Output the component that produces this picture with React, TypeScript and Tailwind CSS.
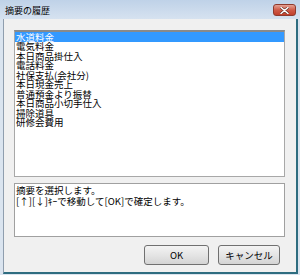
import React from "react";

const items = [
  "水道料金",
  "電気料金",
  "本日商品掛仕入",
  "電話料金",
  "社保支払(会社分)",
  "本日現金売上",
  "普通預金より振替",
  "本日商品小切手仕入",
  "掃除道具",
  "研修会費用",
];

const font = { fontFamily: '"Noto Sans CJK JP", "Noto Sans", sans-serif' };

export default function App() {
  return (
    <div
      className="w-[300px] h-[275px] flex flex-col bg-[#dae4ef] text-black overflow-hidden"
      style={font}
    >
      {/* Title bar */}
      <div className="h-[19px] flex items-start pl-[5px] bg-gradient-to-b from-[#bfd2e8] to-[#d6e2f0] shrink-0">
        <span className="text-[9px] leading-[9px] mt-[6px]">摘要の履歴</span>
        <div className="ml-auto mr-[4px] mt-[4px] w-[23px] h-[12px] rounded-[3px] border border-[#8e3a2d] bg-gradient-to-b from-[#e4a194] via-[#cf5a47] to-[#c0402c] flex items-center justify-center">
          <svg width="9" height="7" viewBox="0 0 9 7">
            <path d="M1 0.5 L8 6.5 M8 0.5 L1 6.5" stroke="#5a2a22" strokeWidth="2.6" strokeLinecap="round" />
            <path d="M1 0.5 L8 6.5 M8 0.5 L1 6.5" stroke="#ffffff" strokeWidth="1.5" strokeLinecap="round" />
          </svg>
        </div>
      </div>

      {/* Client area */}
      <div className="flex-1 ml-[3px] mr-[2px] mb-[1px] border-l border-l-[#8f9eae] border-r-2 border-r-[#2e6d80] border-b-2 border-b-[#2e6d80] bg-[#f0f0f0] flex flex-col pt-[11px] pl-[10px] pr-[11px]">
        {/* List box */}
        <div className="h-[147px] bg-white border border-[#a8a8a8] border-t-2 border-t-[#8a8a8a] flex flex-col">
          {items.map((t, i) => (
            <div
              key={t}
              className={
                i === 0
                  ? "h-[10px] leading-[10px] text-[9.5px] pl-[1px] bg-[#3399ff] text-white whitespace-nowrap"
                  : "h-[9.55px] leading-[9.55px] text-[9.5px] pl-[1px] whitespace-nowrap"
              }
            >
              {t}
            </div>
          ))}
        </div>

        {/* Description */}
        <div className="mt-[6px] h-[54px] bg-white border border-[#a0a0a0] pt-[1px] pl-[1px] text-[9.5px] leading-[11px]">
          <div>摘要を選択します。</div>
          <div>[↑][↓]ｷｰで移動して[OK]で確定します。</div>
        </div>

        {/* Buttons */}
        <div className="mt-[8px] flex justify-end gap-[9px] pr-[5px]">
          <button className="w-[65px] h-[20px] rounded-[3px] border border-[#707070] bg-gradient-to-b from-[#f3f3f3] via-[#e5e5e5] to-[#d4d4d4] text-[9.5px] leading-[18px]">
            OK
          </button>
          <button className="w-[62px] h-[20px] rounded-[3px] border border-[#707070] bg-gradient-to-b from-[#f3f3f3] via-[#e5e5e5] to-[#d4d4d4] text-[9.5px] leading-[18px]">
            キャンセル
          </button>
        </div>
      </div>
    </div>
  );
}
